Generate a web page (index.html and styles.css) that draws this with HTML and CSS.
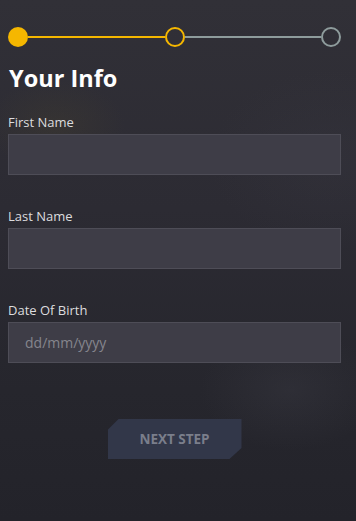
FILE: index.html
```html
<!DOCTYPE html>
<html lang="en">
<head>
<meta charset="utf-8">
<title>Your Info</title>
<link rel="stylesheet" href="styles.css">
</head>
<body>
<div class="page">
  <div class="progress">
    <span class="dot dot-done"></span>
    <span class="line line-done"></span>
    <span class="dot dot-current"></span>
    <span class="line"></span>
    <span class="dot dot-next"></span>
  </div>
  <h1 class="title">Your Info</h1>
  <form class="form">
    <label class="field">
      <span class="label">First Name</span>
      <input class="input" type="text">
    </label>
    <label class="field">
      <span class="label">Last Name</span>
      <input class="input" type="text">
    </label>
    <label class="field">
      <span class="label">Date Of Birth</span>
      <input class="input" type="text" placeholder="dd/mm/yyyy">
    </label>
    <div class="actions">
      <button type="button" class="next">NEXT STEP</button>
    </div>
  </form>
</div>
</body>
</html>
```
FILE: styles.css
```css
html, body {
  margin: 0;
  height: 100%;
}
body {
  font-family: "Open Sans", "Noto Sans", sans-serif;
  color: #e6e6e8;
  background:
    radial-gradient(ellipse 70px 45px at 55px 125px, rgba(90, 80, 40, 0.18), transparent 100%),
    radial-gradient(ellipse 120px 90px at 330px 160px, rgba(60, 60, 70, 0.25), transparent 100%),
    radial-gradient(ellipse 90px 60px at 290px 390px, rgba(70, 70, 80, 0.25), transparent 100%),
    linear-gradient(180deg, #313037 0%, #2c2b33 40%, #26262d 75%, #23232a 100%);
  overflow: hidden;
}
.page {
  padding: 27px 15px 0 8px;
}
.progress {
  display: flex;
  align-items: center;
  height: 20px;
}
.dot {
  box-sizing: border-box;
  width: 20px;
  height: 20px;
  border-radius: 50%;
  flex: none;
}
.dot-done {
  background: #f5b700;
}
.dot-current {
  border: 2px solid #f5b700;
}
.dot-next {
  border: 2px solid #8e9c9c;
}
.line {
  flex: 1;
  height: 2px;
  background: #8e9c9c;
}
.line-done {
  background: #f5b700;
}
.title {
  margin: 15px 0 0 1px;
  font-size: 23.5px;
  line-height: 32px;
  font-weight: 700;
  color: #ffffff;
}
.form {
  margin: 19px 0 0;
  display: flex;
  flex-direction: column;
  gap: 32px;
}
.field {
  display: flex;
  flex-direction: column;
}
.label {
  font-size: 13px;
  line-height: 18px;
  color: #dcdcdf;
  margin-bottom: 3px;
}
.input {
  box-sizing: border-box;
  height: 41px;
  width: 100%;
  margin: 0;
  background: #3e3d47;
  border: 1px solid #4e4d57;
  border-radius: 0;
  padding: 0 16px;
  font-family: "Open Sans", "Noto Sans", sans-serif;
  font-size: 14px;
  color: #dcdcdf;
  outline: none;
}
.input::placeholder {
  color: #85858d;
}
.actions {
  display: flex;
  justify-content: center;
  margin-top: 24px;
}
.next {
  width: 134px;
  height: 40px;
  border: 0;
  margin: 0;
  padding: 0;
  background: #323749;
  color: #7a7e8b;
  font-family: "Open Sans", "Noto Sans", sans-serif;
  font-size: 13.5px;
  font-weight: 700;
  clip-path: polygon(11px 0, 100% 0, 100% calc(100% - 11px), calc(100% - 12px) 100%, 0 100%, 0 11px);
  cursor: pointer;
}
```
